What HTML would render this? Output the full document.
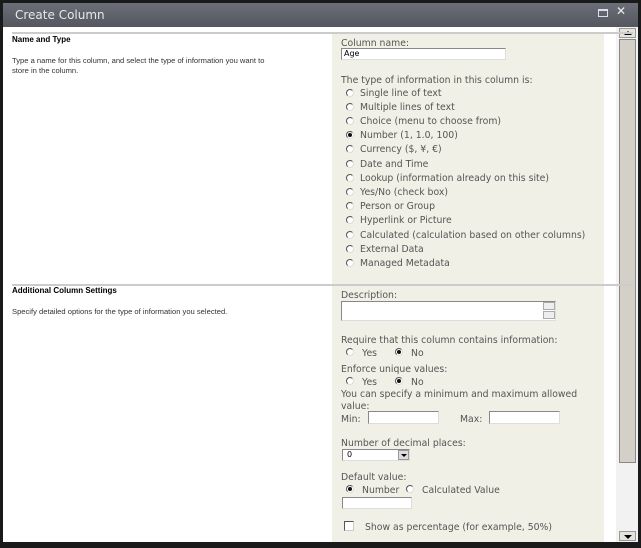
<!DOCTYPE html><html><head><meta charset="utf-8"><style>
*{margin:0;padding:0;box-sizing:border-box}
body{width:641px;height:548px;background:#1a1a1a;position:relative;overflow:hidden;font-family:"DejaVu Sans","Liberation Sans",sans-serif}
.a{position:absolute;white-space:nowrap}
#title{left:3px;top:3px;width:635px;height:24px;background:linear-gradient(#6d6f78,#55575f);color:#e8e8ec;font-size:12px;line-height:24px;padding-left:12px}
#main{left:3px;top:27px;width:613px;height:515px;background:#fff}
.pan{background:#f0f0e6}
.t{font-size:9.3px;color:#555}
.b{font-size:8px;font-weight:bold;color:#000;font-family:"Liberation Sans",sans-serif}
.d{font-size:7.6px;color:#333;line-height:10px;font-family:"Liberation Sans",sans-serif}
.r{width:8px;height:8px;border-radius:50%;border:1px solid #555;border-right-color:#ddd;border-bottom-color:#ddd;background:#fff}
.r.on::after{content:"";position:absolute;left:1px;top:1px;width:4px;height:4px;border-radius:50%;background:#111}
.in{background:#fff;border:1px solid #888;border-right-color:#ddd;border-bottom-color:#ddd}
</style></head><body>
<div class="a" id="title">Create Column</div>
<div class="a" style="left:598px;top:9px;width:10px;height:8px;border:1px solid #dde;border-top-width:2px"></div>
<div class="a" style="left:616px;top:4px;color:#eee;font-size:12px;font-weight:bold">✕</div>
<div class="a" id="main"></div>
<div class="a" style="left:616px;top:27px;width:22px;height:515px;background:#f2f2f2"></div>
<div class="a" style="left:619px;top:28px;width:17px;height:10px;background:#e6e3dc;border:1px solid #999"></div>
<div class="a" style="left:624px;top:31px;border:4px solid transparent;border-bottom:4px solid #000;border-top:0"></div>
<div class="a" style="left:619px;top:39px;width:17px;height:424px;background:#d4d0c8;border:1px solid #888"></div>
<div class="a" style="left:619px;top:531px;width:17px;height:10px;background:#e6e3dc;border:1px solid #999"></div>
<div class="a" style="left:624px;top:535px;border:4px solid transparent;border-top:4px solid #000;border-bottom:0"></div>
<div class="a" style="left:12px;top:32px;width:621px;height:2px;background:#ccc"></div>
<div class="a pan" style="left:332px;top:34px;width:272px;height:250px"></div>
<div class="a" style="left:12px;top:284px;width:621px;height:2px;background:#ccc"></div>
<div class="a pan" style="left:332px;top:286px;width:272px;height:256px"></div>
<div class="a b" style="left:12px;top:35px">Name and Type</div>
<div class="a d" style="left:12px;top:56px">Type a name for this column, and select the type of information you want to<br>store in the column.</div>
<div class="a b" style="left:12px;top:286px">Additional Column Settings</div>
<div class="a d" style="left:12px;top:307px">Specify detailed options for the type of information you selected.</div>
<div class="a t" style="left:341px;top:38px">Column name:</div>
<div class="a in" style="left:341px;top:48px;width:165px;height:12px;font-size:8px;color:#000;padding-left:2px;line-height:10px">Age</div>
<div class="a t" style="left:341px;top:75px">The type of information in this column is:</div>
<div id="rl"></div>
<div class="a t" style="left:341px;top:290px">Description:</div>
<div class="a in" style="left:341px;top:301px;width:215px;height:20px"></div>
<div class="a" style="left:543px;top:302px;width:12px;height:8px;background:#eee;border:1px solid #aaa"></div>
<div class="a" style="left:543px;top:311px;width:12px;height:8px;background:#eee;border:1px solid #aaa"></div>
<div class="a t" style="left:341px;top:335px">Require that this column contains information:</div>
<div class="a r" style="left:346px;top:348px"></div><div class="a t" style="left:362px;top:348px">Yes</div>
<div class="a r on" style="left:395px;top:348px"></div><div class="a t" style="left:411px;top:348px">No</div>
<div class="a t" style="left:341px;top:364px">Enforce unique values:</div>
<div class="a r" style="left:346px;top:377px"></div><div class="a t" style="left:362px;top:377px">Yes</div>
<div class="a r on" style="left:395px;top:377px"></div><div class="a t" style="left:411px;top:377px">No</div>
<div class="a t" style="left:341px;top:389px">You can specify a minimum and maximum allowed</div>
<div class="a t" style="left:341px;top:401px">value:</div>
<div class="a t" style="left:341px;top:414px">Min:</div>
<div class="a in" style="left:368px;top:411px;width:71px;height:13px"></div>
<div class="a t" style="left:460px;top:414px">Max:</div>
<div class="a in" style="left:489px;top:411px;width:71px;height:13px"></div>
<div class="a t" style="left:341px;top:438px">Number of decimal places:</div>
<div class="a in" style="left:342px;top:449px;width:68px;height:12px;font-size:8px;padding-left:4px;line-height:10px">0</div>
<div class="a" style="left:398px;top:450px;width:11px;height:10px;background:#ddd;border:1px solid #999"></div>
<div class="a" style="left:401px;top:454px;border:3px solid transparent;border-top:3px solid #000;border-bottom:0"></div>
<div class="a t" style="left:341px;top:472px">Default value:</div>
<div class="a r on" style="left:346px;top:485px"></div><div class="a t" style="left:362px;top:485px">Number</div>
<div class="a r" style="left:406px;top:485px"></div><div class="a t" style="left:422px;top:485px">Calculated Value</div>
<div class="a in" style="left:342px;top:497px;width:70px;height:12px"></div>
<div class="a" style="left:344px;top:521px;width:10px;height:10px;background:#fff;border:1px solid #555;border-right-color:#ccc;border-bottom-color:#ccc"></div>
<div class="a t" style="left:365px;top:522px">Show as percentage (for example, 50%)</div>
<script>
var L=["Single line of text","Multiple lines of text","Choice (menu to choose from)","Number (1, 1.0, 100)","Currency ($, ¥, €)","Date and Time","Lookup (information already on this site)","Yes/No (check box)","Person or Group","Hyperlink or Picture","Calculated (calculation based on other columns)","External Data","Managed Metadata"],h="";
L.forEach(function(s,i){var y=87.5+i*14.2;h+='<div class="a r'+(i==3?' on':'')+'" style="left:346px;top:'+(y+1)+'px"></div><div class="a t" style="left:360px;top:'+y+'px">'+s+'</div>'});
document.getElementById("rl").outerHTML=h;
</script>
</body></html>
